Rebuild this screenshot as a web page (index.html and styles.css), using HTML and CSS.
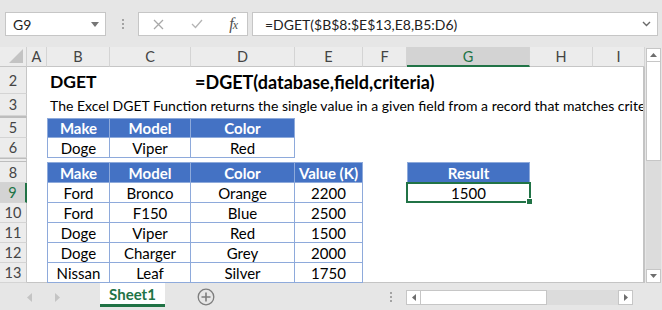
FILE: index.html
```html
<!DOCTYPE html>
<html lang="en">
<head>
  <meta charset="UTF-8">
  <title>DGET Function</title>
  <link rel="stylesheet" href="styles.css">
</head>
<body>

  <div class="formula-bar">
    <div class="name-box">
      <span>G9</span>
      <svg class="nb-arrow" width="8" height="5" viewBox="0 0 8 5"><path d="M0 0h8L4 5z" fill="#767676"/></svg>
    </div>
    <div class="grip"><i></i><i></i><i></i></div>
    <div class="fx-box">
      <svg width="11" height="11" viewBox="0 0 11 11"><path d="M1 1l9 9M10 1l-9 9" stroke="#a8a8a8" stroke-width="1.3"/></svg>
      <svg width="12" height="10" viewBox="0 0 12 10"><path d="M1 5l3.5 3.5L11 1" stroke="#b4b4b4" stroke-width="1.3" fill="none"/></svg>
      <span class="fx"><i>f</i><i class="fx-x">x</i></span>
    </div>
    <div class="formula-input">
      <span>=DGET($B$8:$E$13,E8,B5:D6)</span>
      <svg width="9" height="6" viewBox="0 0 9 6"><path d="M1 1l3.5 3.5L8 1" stroke="#6a6a6a" stroke-width="1.4" fill="none"/></svg>
    </div>
  </div>

  <div class="sheet">
    <div class="corner"><svg width="14" height="14" viewBox="0 0 14 14"><path d="M14 0v14H0z" fill="#c3c3c3"/></svg></div>
    <div class="col-head ca">A</div>
    <div class="col-head cb">B</div>
    <div class="col-head cc">C</div>
    <div class="col-head cd">D</div>
    <div class="col-head ce">E</div>
    <div class="col-head cf">F</div>
    <div class="col-head selected cg">G</div>
    <div class="col-head ch">H</div>
    <div class="col-head ci">I</div>

    <div class="vscroll">
      <div class="sb-btn"><svg width="7" height="4" viewBox="0 0 7 4"><path d="M0 4h7L3.5 0z" fill="#6e6e6e"/></svg></div>
      <div class="sb-thumb"></div>
      <div class="sb-track"></div>
      <div class="sb-btn"><svg width="7" height="4" viewBox="0 0 7 4"><path d="M0 0h7L3.5 4z" fill="#6e6e6e"/></svg></div>
    </div>

    <div class="row-head r2">2</div>
    <div class="row-head r3">3</div>
    <div class="row-head hidden r4"></div>
    <div class="row-head r5">5</div>
    <div class="row-head r6">6</div>
    <div class="row-head hidden r7"></div>
    <div class="row-head r8">8</div>
    <div class="row-head selected r9">9</div>
    <div class="row-head r10">10</div>
    <div class="row-head r11">11</div>
    <div class="row-head r12">12</div>
    <div class="row-head r13">13</div>

    <div class="cells"></div>

    <div class="title cb r2">DGET</div>
    <div class="title syntax r2">=DGET(database,field,criteria)</div>
    <div class="desc r3">The Excel DGET Function returns the single value in a given field from a record that matches criteria.</div>

    <!-- criteria -->
    <div class="cell th first cb r5">Make</div>
    <div class="cell th cc r5">Model</div>
    <div class="cell th cd r5">Color</div>
    <div class="cell first cb r6">Doge</div>
    <div class="cell cc r6">Viper</div>
    <div class="cell cd r6">Red</div>

    <!-- database -->
    <div class="cell th first cb r8">Make</div>
    <div class="cell th cc r8">Model</div>
    <div class="cell th cd r8">Color</div>
    <div class="cell th ce r8">Value (K)</div>

    <div class="cell first cb r9">Ford</div>
    <div class="cell cc r9">Bronco</div>
    <div class="cell cd r9">Orange</div>
    <div class="cell ce r9">2200</div>

    <div class="cell first cb r10">Ford</div>
    <div class="cell cc r10">F150</div>
    <div class="cell cd r10">Blue</div>
    <div class="cell ce r10">2500</div>

    <div class="cell first cb r11">Doge</div>
    <div class="cell cc r11">Viper</div>
    <div class="cell cd r11">Red</div>
    <div class="cell ce r11">1500</div>

    <div class="cell first cb r12">Doge</div>
    <div class="cell cc r12">Charger</div>
    <div class="cell cd r12">Grey</div>
    <div class="cell ce r12">2000</div>

    <div class="cell first cb r13">Nissan</div>
    <div class="cell cc r13">Leaf</div>
    <div class="cell cd r13">Silver</div>
    <div class="cell ce r13">1750</div>

    <!-- result -->
    <div class="cell th first cg r8">Result</div>
    <div class="cell result cg r9">1500</div>
  </div>

  <div class="tab-bar">
    <div class="tab-nav">
      <svg width="5" height="9" viewBox="0 0 5 9"><path d="M5 0v9L0 4.5z" fill="#c4c4c4"/></svg>
      <svg width="5" height="9" viewBox="0 0 5 9"><path d="M0 0v9l5-4.5z" fill="#c4c4c4"/></svg>
    </div>
    <div class="tab">Sheet1</div>
    <svg class="add-sheet" width="18" height="18" viewBox="0 0 18 18"><circle cx="9" cy="9" r="7.8" fill="none" stroke="#7d7d7d" stroke-width="1.3"/><path d="M9 4.5v9M4.5 9h9" stroke="#7d7d7d" stroke-width="1.6"/></svg>
    <div class="grip tab-grip"><i></i><i></i><i></i></div>
    <div class="hscroll">
      <div class="sb-btn"><svg width="4" height="7" viewBox="0 0 4 7"><path d="M4 0v7L0 3.5z" fill="#6e6e6e"/></svg></div>
      <div class="sb-thumb"></div>
      <div class="sb-track"></div>
      <div class="sb-btn"><svg width="4" height="7" viewBox="0 0 4 7"><path d="M0 0v7l4-3.5z" fill="#6e6e6e"/></svg></div>
    </div>
  </div>

</body>
</html>
```

FILE: styles.css
```css
body {
  margin: 0;
  width: 662px;
  height: 310px;
  overflow: hidden;
  background-color: #e6e6e6;
  font-family: Lato, "Liberation Sans", sans-serif;
  font-size: 14px;
  color: #000;
}

/* formula bar */
.formula-bar {
  display: flex;
  align-items: center;
  height: 24px;
  padding: 12px 4px 11px 5px;
}
.name-box, .fx-box, .formula-input {
  height: 24px;
  box-sizing: border-box;
  background-color: #fff;
  border: 1px solid #c6c6c6;
  display: flex;
  align-items: center;
}
.name-box {
  width: 101px;
  padding: 0 6px 0 7px;
  justify-content: space-between;
  color: #222;
}
.grip {
  display: flex;
  flex-direction: column;
  gap: 2px;
  width: 2px;
  margin: 0 14px 0 16px;
}
.grip i {
  width: 2px;
  height: 2px;
  background-color: #a3a3a3;
}
.fx-box {
  width: 110px;
  padding: 0 10px 0 14px;
  justify-content: space-between;
}
.fx {
  font-family: "Liberation Serif", serif;
  font-size: 16px;
  color: #505050;
  letter-spacing: -1px;
}
.fx-x {
  font-size: 12px;
}
.formula-input {
  flex: 1;
  margin-left: 4px;
  padding: 0 6px 0 12px;
  justify-content: space-between;
  color: #222;
}

/* grid */
.sheet {
  display: grid;
  grid-template-columns: 27px 20px 63px 81px 104px 68px 44px 123px 63px 52px 17px;
  grid-template-rows: 20px 27px 22px 2px 20px 20px 4px 21px 20px 20px 20px 20px 20px;
}
.corner {
  grid-row: 1;
  grid-column: 1;
  display: flex;
  align-items: flex-end;
  justify-content: flex-end;
  padding: 0 3px 3px 0;
  border-right: 1px solid #d0d0d0;
  border-bottom: 1px solid #c6c6c6;
  background-color: #ececec;
}
.col-head, .row-head {
  display: flex;
  align-items: center;
  justify-content: center;
  background-color: #ececec;
  color: #444;
  font-size: 14.5px;
  box-sizing: border-box;
}
.col-head {
  grid-row: 1;
  border-right: 1px solid #d4d4d4;
  border-bottom: 1px solid #c6c6c6;
}
.col-head.selected {
  background-color: #d3d3d3;
  color: #217346;
  border-bottom: 2px solid #217346;
}
.row-head {
  grid-column: 1;
  border-right: 1px solid #c6c6c6;
  border-bottom: 1px solid #d4d4d4;
}
.row-head.selected {
  background-color: #d3d3d3;
  color: #217346;
  border-right: 2px solid #217346;
}
.row-head.hidden {
  border-bottom: 1px solid #bdbdbd;
  border-top: 1px solid #bdbdbd;
}
.cells {
  grid-column: 2 / 11;
  grid-row: 2 / 14;
  background-color: #fff;
  border-right: 2px solid #c4c4c4;
  border-bottom: 1px solid #c4c4c4;
}

.ca { grid-column: 2; }
.cb { grid-column: 3; }
.cc { grid-column: 4; }
.cd { grid-column: 5; }
.ce { grid-column: 6; }
.cf { grid-column: 7; }
.cg { grid-column: 8; }
.ch { grid-column: 9; }
.ci { grid-column: 10; }
.r2 { grid-row: 2; }
.r3 { grid-row: 3; }
.r4 { grid-row: 4; }
.r5 { grid-row: 5; }
.r6 { grid-row: 6; }
.r7 { grid-row: 7; }
.r8 { grid-row: 8; }
.r9 { grid-row: 9; }
.r10 { grid-row: 10; }
.r11 { grid-row: 11; }
.r12 { grid-row: 12; }
.r13 { grid-row: 13; }

.title {
  display: flex;
  align-items: center;
  padding-left: 3px;
  padding-top: 2px;
  font-weight: bold;
  font-size: 17.5px;
  white-space: nowrap;
}
.syntax {
  grid-column: 5 / 10;
  padding-left: 4px;
  font-size: 18px;
}
.desc {
  grid-column: 3 / 11;
  display: flex;
  align-items: center;
  padding-left: 3px;
  margin-right: 2px;
  white-space: nowrap;
  overflow: hidden;
  font-size: 14px;
}

.cell {
  display: flex;
  align-items: center;
  justify-content: center;
  box-sizing: border-box;
  border-right: 1px solid #8eaadb;
  border-bottom: 1px solid #8eaadb;
  font-size: 15px;
  white-space: nowrap;
}
.cell.first {
  border-left: 1px solid #8eaadb;
}
.cell.th {
  background-color: #4472c4;
  color: #fff;
  font-weight: bold;
  border-top: 1px solid #8eaadb;
}
.cell.result {
  position: relative;
  border: 2px solid #217346;
  margin: -1px -1px 0 -1px;
}
.cell.result::after {
  content: "";
  position: absolute;
  right: -4px;
  bottom: -4px;
  width: 5px;
  height: 5px;
  background-color: #217346;
  border: 1px solid #fff;
}

/* scrollbars */
.vscroll {
  grid-column: 11;
  grid-row: 1 / 14;
  display: flex;
  flex-direction: column;
  padding: 1px 1px 0 1px;
  background-color: #e6e6e6;
}
.sb-btn {
  display: flex;
  align-items: center;
  justify-content: center;
  box-sizing: border-box;
  background-color: #fff;
  border: 1px solid #c6c6c6;
}
.vscroll .sb-btn {
  height: 14px;
}
.vscroll .sb-thumb {
  height: 99px;
  box-sizing: border-box;
  background-color: #fff;
  border: 1px solid #c6c6c6;
  border-top: none;
}
.sb-track {
  flex: 1;
  background-color: #dcdcdc;
}

.tab-bar {
  display: flex;
  align-items: flex-start;
  height: 27px;
}
.tab-nav {
  display: flex;
  gap: 23px;
  padding: 10px 0 0 27px;
  box-sizing: border-box;
  width: 100px;
}
.tab {
  width: 65px;
  height: 24px;
  box-sizing: border-box;
  background-color: #fff;
  border-bottom: 3px solid #217346;
  color: #217346;
  font-weight: bold;
  font-size: 15px;
  text-align: center;
  line-height: 22px;
}
.add-sheet {
  margin: 5px 0 0 32px;
}
.tab-grip {
  margin: 9px 14px 0 175px;
}
.hscroll {
  display: flex;
  width: 227px;
  height: 15px;
  margin-top: 7px;
}
.hscroll .sb-btn {
  width: 15px;
}
.hscroll .sb-thumb {
  width: 126px;
  box-sizing: border-box;
  background-color: #fff;
  border: 1px solid #c6c6c6;
  border-left: none;
}
```
